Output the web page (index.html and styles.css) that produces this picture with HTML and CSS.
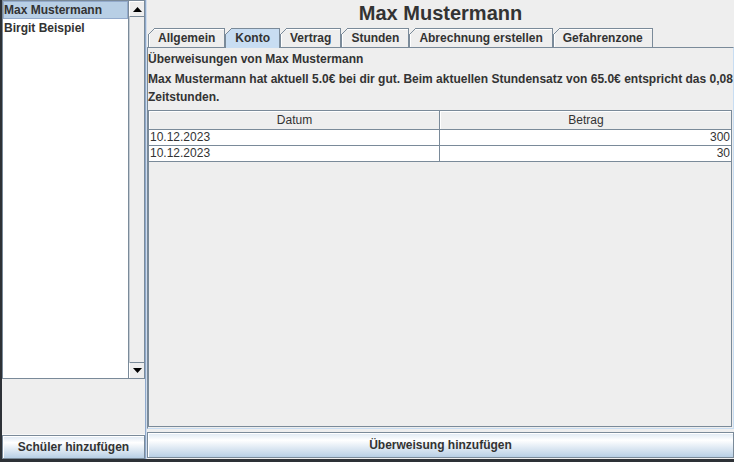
FILE: index.html
```html
<!DOCTYPE html>
<html lang="de">
<head>
<meta charset="utf-8">
<title>Max Mustermann</title>
<link rel="stylesheet" href="styles.css">
</head>
<body>
<div class="window">
  <div class="side">
    <div class="listpane">
      <ul class="list">
        <li class="item sel">Max Mustermann</li>
        <li class="item">Birgit Beispiel</li>
      </ul>
      <div class="vscroll">
        <div class="sbtn up"><svg width="9" height="5" viewBox="0 0 9 5"><polygon points="0,5 9,5 4.5,0" fill="#000"/></svg></div>
        <div class="track"></div>
        <div class="sbtn down"><svg width="9" height="5" viewBox="0 0 9 5"><polygon points="0,0 9,0 4.5,5" fill="#000"/></svg></div>
      </div>
    </div>
    <div class="side-fill"></div>
    <button class="mbtn side-btn">Schüler hinzufügen</button>
  </div>
  <div class="divider"></div>
  <div class="main">
    <h1 class="title">Max Mustermann</h1>
    <div class="tabs">
      <div class="tab">Allgemein</div>
      <div class="tab sel">Konto</div>
      <div class="tab">Vertrag</div>
      <div class="tab">Stunden</div>
      <div class="tab">Abrechnung erstellen</div>
      <div class="tab">Gefahrenzone</div>
    </div>
    <div class="panel">
      <div class="lbl">Überweisungen von Max Mustermann</div>
      <p class="info">Max Mustermann hat aktuell 5.0€ bei dir gut. Beim aktuellen Stundensatz von 65.0€ entspricht das 0,08<br>Zeitstunden.</p>
      <div class="tablepane">
        <div class="row head">
          <div class="cell">Datum</div>
          <div class="cell">Betrag</div>
        </div>
        <div class="row">
          <div class="cell">10.12.2023</div>
          <div class="cell num">300</div>
        </div>
        <div class="row">
          <div class="cell">10.12.2023</div>
          <div class="cell num">30</div>
        </div>
      </div>
    </div>
    <button class="mbtn main-btn">Überweisung hinzufügen</button>
  </div>
</div>
</body>
</html>
```

FILE: styles.css
```css
html, body {
  margin: 0;
  padding: 0;
}
body {
  width: 734px;
  height: 462px;
  background: #2d3136;
  font-family: "Liberation Sans", Arial, sans-serif;
  font-size: 12px;
  color: #333333;
  overflow: hidden;
}
.window {
  margin-left: 2px;
  width: 732px;
  height: 459px;
  display: flex;
  background: #eeeeee;
}

/* left column */
.side {
  width: 143px;
  display: flex;
  flex-direction: column;
}
.listpane {
  height: 379px;
  box-sizing: border-box;
  border: 1px solid #7a8a99;
  display: flex;
}
.list {
  flex: 1;
  margin: 0;
  padding: 0;
  list-style: none;
  background: #ffffff;
}
.item {
  height: 18px;
  box-sizing: border-box;
  line-height: 17px;
  border: 1px solid transparent;
  font-weight: bold;
  white-space: nowrap;
}
.item.sel {
  background: #b8cfe5;
  border-color: #93aacb;
}
.vscroll {
  width: 15px;
  border-left: 1px solid #7a8a99;
  display: flex;
  flex-direction: column;
  background: #eeeeee;
}
.sbtn {
  height: 16px;
  box-sizing: border-box;
  display: flex;
  align-items: center;
  justify-content: center;
  background: #eeeeee;
  border-left: 1px solid #ffffff;
}
.sbtn.up {
  border-top: 1px solid #ffffff;
  border-bottom: 1px solid #7a8a99;
}
.sbtn.down {
  border-top: 1px solid #7a8a99;
}
.track {
  flex: 1;
  box-shadow: inset 1px 0 #c4ccd4;
}
.side-fill {
  flex: 1;
  border-bottom: 1px solid #f8f8f8;
}
.side-btn {
  height: 24px;
}

.mbtn {
  display: block;
  width: 100%;
  margin: 0;
  padding: 0;
  box-sizing: border-box;
  border: 1px solid #7a8a99;
  background: linear-gradient(#dde8f3 0%, #ffffff 30%, #b8cfe5 100%);
  font-family: "Liberation Sans", Arial, sans-serif;
  font-size: 12px;
  font-weight: bold;
  color: #333333;
  box-shadow: inset 1px 1px #ffffff;
}

.divider {
  width: 2px;
  background: linear-gradient(to right, #8fa9cb 0 1px, #cfdcec 1px 2px);
}

/* right column */
.main {
  flex: 1;
  display: flex;
  flex-direction: column;
  min-width: 0;
}
.title {
  margin: 0;
  height: 28px;
  line-height: 26px;
  text-align: center;
  font-size: 20px;
  font-weight: bold;
  color: #333333;
}
.tabs {
  height: 19px;
  display: flex;
  align-items: flex-start;
  padding-left: 1px;
  position: relative;
  z-index: 1;
}
.tab {
  position: relative;
  height: 19px;
  box-sizing: border-box;
  padding: 0 9px;
  border: 1px solid #7a8a99;
  border-bottom: none;
  background: #eeeeee;
  line-height: 18px;
  font-weight: bold;
  white-space: nowrap;
  box-shadow: inset 1px 1px #ffffff;
}
.tab::before {
  content: "";
  position: absolute;
  left: -1px;
  top: -1px;
  width: 7px;
  height: 7px;
  background: linear-gradient(to bottom right, #eeeeee 0 calc(50% - 0.6px), #7a8a99 calc(50% - 0.6px) calc(50% + 0.6px), transparent calc(50% + 0.6px));
}
.tab.sel {
  height: 20px;
  margin-bottom: -1px;
  background: #c8ddf2;
  box-shadow: none;
}
.panel {
  flex: 1;
  display: flex;
  flex-direction: column;
  border-top: 1px solid #7a8a99;
  border-left: 1px solid #7a8a99;
  border-right: 1px solid #c8ddf2;
  border-bottom: 1px solid #c8ddf2;
  padding: 3px 0 1px 0;
}
.lbl {
  height: 16px;
  line-height: 16px;
  font-weight: bold;
  white-space: nowrap;
}
.info {
  margin: 3px 0 4px 0;
  line-height: 18px;
  font-weight: bold;
  white-space: nowrap;
}
.tablepane {
  flex: 1;
  margin-right: 1px;
  border: 1px solid #7a8a99;
  background: #eeeeee;
}
.row {
  display: grid;
  grid-template-columns: 1fr 1fr;
  height: 16px;
  box-sizing: border-box;
  border-bottom: 1px solid #7a8a99;
  background: #ffffff;
}
.row.head {
  height: 19px;
  background: #eeeeee;
}
.cell {
  line-height: 15px;
  padding-left: 1px;
  white-space: nowrap;
  overflow: hidden;
}
.cell:first-child {
  border-right: 1px solid #7a8a99;
}
.row.head .cell {
  line-height: 18px;
  text-align: center;
  box-shadow: inset 1px 1px #ffffff;
}
.cell.num {
  text-align: right;
  padding-right: 1px;
}
.main-btn {
  height: 26px;
  margin-top: 3px;
  margin-bottom: 1px;
}
```
